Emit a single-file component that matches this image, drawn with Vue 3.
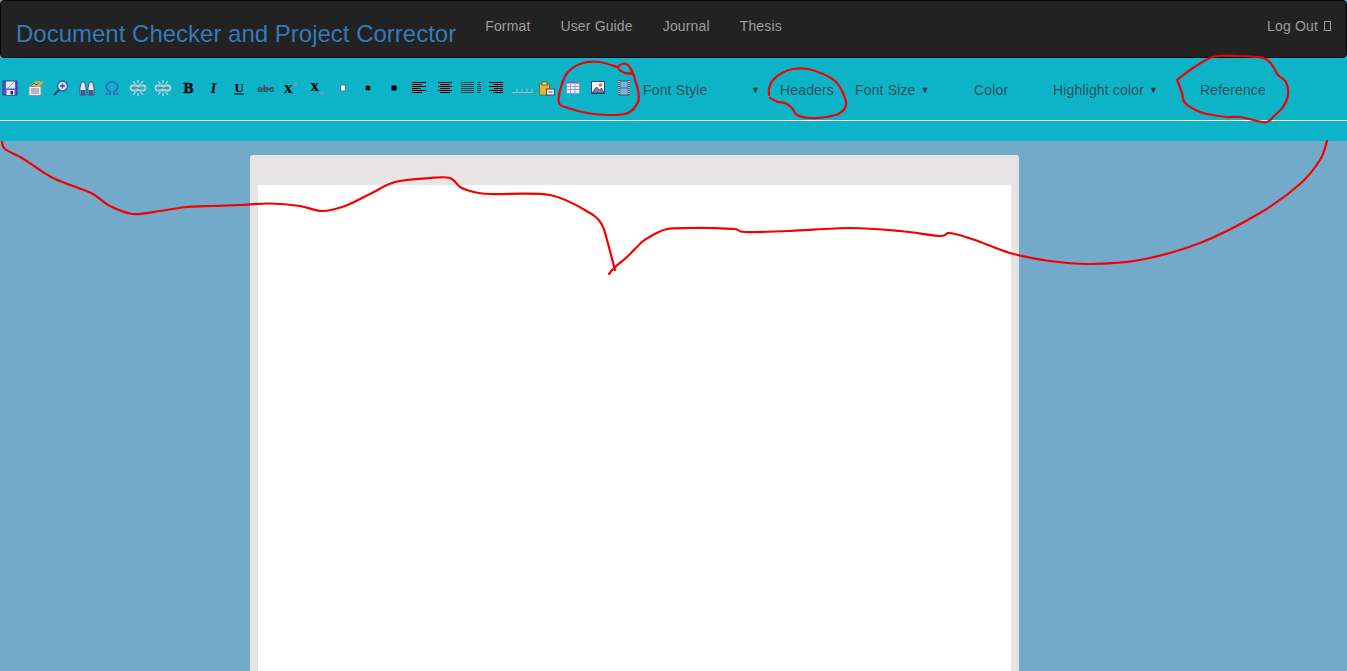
<template>
  <div class="page">
    <nav class="navbar">
      <a class="brand">Document Checker and Project Corrector</a>
      <ul class="nav-links">
        <li v-for="link in links" :key="link">{{ link }}</li>
      </ul>
      <a class="logout">Log Out <span class="missing-glyph"></span></a>
    </nav>

    <div class="toolbar">
      <div class="tools">
        <div class="icons">
          <span v-for="(icon, i) in icons" :key="i" class="tool">
            <svg width="18" height="18" viewBox="0 0 18 18" v-html="icon"></svg>
          </span>
        </div>
        <div class="menus">
          <span class="menu font-style">Font Style<i class="caret">▼</i></span>
          <span class="menu headers">Headers</span>
          <span class="menu font-size">Font Size<i class="caret">▼</i></span>
          <span class="menu color">Color</span>
          <span class="menu highlight">Highlight color<i class="caret">▼</i></span>
          <span class="menu reference">Reference</span>
        </div>
      </div>
      <div class="toolbar-foot"></div>
    </div>

    <main class="desk">
      <div class="sheet">
        <div class="sheet-body"></div>
      </div>
    </main>

    <!-- red pen marks drawn over the screenshot -->
    <svg class="pen" width="1347" height="671" viewBox="0 0 1347 671" fill="none">
      <path v-for="(d, i) in marks" :key="i" :d="d" />
    </svg>
  </div>
</template>

<script setup>
const links = ['Format', 'User Guide', 'Journal', 'Thesis']

const bars = (rows, color = '#000') =>
  rows.map(([x, y, w]) => `<rect x="${x}" y="${y}" width="${w}" height="1" fill="${color}"/>`).join('')

const link = `<g fill="none" stroke="#c4c9d2" stroke-width="1.8"><rect x="1.500" y="6.500" width="8" height="5" rx="2.500"/><rect x="8.500" y="6.500" width="8" height="5" rx="2.500"/></g><path d="M7 8.500l4 1" stroke="#6d7480" stroke-width="1.200"/><path d="M4 2l2.500 3M14 2l-2.500 3M4 16l2.500-3M14 16l-2.500-3M9 1v3M9 14v3" stroke="#e8ebef"/>`

const icons = [
  `<rect x="2" y="2" width="14" height="14" fill="#5a55c4" stroke="#3b3790"/><path d="M5 2.500h9v7H5z" fill="#dfe9f8"/><path d="M7 9l6-6" stroke="#86a3dc"/><rect x="5.500" y="11" width="8" height="5" fill="#e6e6ef"/><rect x="9.500" y="12" width="2.500" height="3.500" fill="#2b2b3a"/>`,
  `<rect x="3" y="7.500" width="12" height="9" fill="#f1f2f2" stroke="#8a93a8"/><path d="M5 10h8M5 12h8M5 14h8" stroke="#6e7c9e"/><path d="M4 7l4-4 4-1 6 1-3 3-2 2-4-1z" fill="#d2b24a"/><path d="M5 7l3-3 2 2M10 6l3-2" stroke="#5e5a46" fill="none"/>`,
  `<path d="M2 16l5-5" stroke="#2e4a72" stroke-width="2.200"/><circle cx="10.500" cy="7" r="5" fill="#dbe8f9" stroke="#2b4fa6" stroke-width="1.300"/><path d="M8 7h5M10.500 4.500v5" stroke="#2b4fa6" stroke-width="1.300"/>`,
  `<path d="M2 9l1.500-6h3L8 9v7H2zM10 9l1.500-6h3L16 9v7h-6z" fill="#e6e8f0" stroke="#3a4578" stroke-width=".8"/><rect x="2.500" y="11" width="5" height="5" fill="#46578f"/><rect x="10.500" y="11" width="5" height="5" fill="#46578f"/>`,
  `<path d="M2.500 15H7v-2.500C4.800 11.500 3.300 9.800 3.300 7.700 3.300 4.800 5.800 3 9 3s5.700 1.800 5.700 4.700c0 2.100-1.500 3.800-3.700 4.800V15h4.500" fill="none" stroke="#4560c8" stroke-width="1.700"/>`,
  link,
  link,
  `<text x="3.500" y="13.500" font-family="Liberation Serif" font-weight="700" font-size="15" fill="#000" stroke="#000" stroke-width=".4">B</text>`,
  `<text x="4.500" y="13.500" font-family="Liberation Serif" font-style="italic" font-weight="700" font-size="15" fill="#000">I</text>`,
  `<text x="3.500" y="12.500" font-family="Liberation Serif" font-weight="700" font-size="13" fill="#000">U</text><rect x="3" y="14.500" width="10" height="1" fill="#000"/>`,
  `<text x="0.500" y="13" font-family="Liberation Sans" font-weight="700" font-size="9.500" fill="#3c4448">abc</text><rect x="0" y="9.500" width="17" height="1" fill="#55464c"/>`,
  `<text x="2" y="13.500" font-family="Liberation Serif" font-weight="700" font-size="17" fill="#000">x</text><rect x="12" y="4" width="3" height="3" fill="#8a8fc8"/>`,
  `<text x="2.500" y="11.500" font-family="Liberation Serif" font-weight="700" font-size="17" fill="#000">x</text><rect x="12.500" y="12.500" width="3" height="3" fill="#8a8fc8"/>`,
  `<rect x="6.500" y="6" width="5" height="6" rx="1.500" fill="#fff" stroke="#333" stroke-width=".6"/>`,
  `<circle cx="9" cy="9" r="2.700" fill="#000" stroke="#ddd" stroke-width=".5" stroke-dasharray="1 1"/>`,
  `<rect x="6.500" y="6.500" width="5" height="5" fill="#000"/>`,
  bars([[2, 3, 14], [2, 5, 10], [2, 7, 14], [2, 9, 9], [2, 11, 14], [2, 13, 10]]),
  bars([[2, 3, 14], [4, 5, 10], [2, 7, 14], [4, 9, 10], [2, 11, 14], [4, 13, 10]]),
  bars([[0, 3, 13], [0, 5, 13], [0, 7, 13], [0, 9, 13], [0, 11, 13], [0, 13, 13], [16, 3, 4], [16, 5, 4], [16, 7, 4], [16, 9, 4], [16, 11, 4], [16, 13, 4]], '#21444c'),
  bars([[2, 3, 14], [6, 5, 10], [2, 7, 14], [7, 9, 9], [2, 11, 14], [6, 13, 10]]),
  `<path d="M-1 13.500h21M4 13.500v-4M9 13.500v-4M14 13.500v-4M19 13.500v-4" stroke="#aab6c2"/>`,
  `<rect x="1.500" y="5" width="10" height="11" fill="#e0b63a" stroke="#87671a"/><rect x="4" y="3" width="5" height="3" fill="#f4e08a" stroke="#7a6020"/><rect x="8.500" y="10" width="8" height="6" fill="#eef1f5" stroke="#454a5a"/><path d="M10.500 13h4" stroke="#555"/>`,
  `<rect x="2.500" y="2.500" width="13" height="12" fill="#eef3fb" stroke="#7d97c8"/><rect x="2.500" y="2.500" width="13" height="2" fill="#4d78c9"/><path d="M2.500 7.500h13M2.500 10.500h13M6.500 5v9.500M11 5v9.500" stroke="#8da6d4"/>`,
  `<rect x="2.500" y="2.500" width="13" height="12" fill="#f5f7fb" stroke="#2a3f86"/><path d="M3 14l4.500-6 3 3 2-2 2.500 5z" fill="#6b7fa8" stroke="#223" stroke-width=".6"/><circle cx="11.500" cy="6" r="1.800" fill="#e8703a"/>`,
  `<rect x="3" y="1" width="12" height="16" fill="#5b6a72"/><rect x="5.500" y="2.500" width="7" height="6" fill="#6fb6ee"/><rect x="5.500" y="9.500" width="7" height="6" fill="#6fb6ee"/><path d="M4 2v14M14 2v14" stroke="#e6e6e6" stroke-dasharray="1 1"/>`
]

// Catmull-Rom through hand-traced points, so the pen strokes stay smooth
const trace = (pts) => {
  let d = `M${pts[0][0]} ${pts[0][1]}`
  for (let i = 0; i < pts.length - 1; i++) {
    const p0 = pts[i - 1] || pts[i]
    const p1 = pts[i]
    const p2 = pts[i + 1]
    const p3 = pts[i + 2] || p2
    const c1 = [p1[0] + (p2[0] - p0[0]) / 6, p1[1] + (p2[1] - p0[1]) / 6]
    const c2 = [p2[0] - (p3[0] - p1[0]) / 6, p2[1] - (p3[1] - p1[1]) / 6]
    d += `C${c1[0]} ${c1[1]} ${c2[0]} ${c2[1]} ${p2[0]} ${p2[1]}`
  }
  return d
}

const marks = [
  [[2, 142], [5, 149], [22, 158], [37, 168], [53, 178], [73, 186], [93, 194], [110, 206], [133, 214], [160, 211], [187, 207], [213, 206], [240, 205], [270, 203.5], [300, 206], [322, 211], [345, 206], [370, 194], [395, 182], [430, 178], [450, 178], [460, 187], [470, 191], [490, 194], [550, 195], [590, 213], [602, 225], [607, 240], [615, 270]],
  [[609, 274], [615, 267], [627, 257], [642, 242], [653, 235], [667, 229], [690, 228], [710, 228], [735, 229], [745, 232], [790, 231], [850, 228], [900, 231], [940, 236], [950, 233], [975, 240], [1010, 253], [1050, 261], [1090, 264], [1140, 260], [1200, 243], [1260, 213], [1300, 184], [1320, 160], [1327, 141]],
  [[617, 67], [600, 62], [583, 63], [568, 72], [561, 87], [559, 103], [568, 108], [587, 113], [610, 115], [628, 113], [638, 102], [638, 90], [635, 80], [633, 74], [625, 73], [618, 68], [622, 64], [628, 65], [633, 73]],
  [[769, 95], [769, 88], [773, 80], [782, 73], [793, 69], [808, 69], [823, 74], [835, 81], [843, 93], [846, 105], [840, 113], [827, 117], [810, 118], [797, 115], [792, 108], [785, 103], [778, 102], [770, 98]],
  [[1177, 80], [1193, 68], [1213, 57], [1237, 56], [1263, 58], [1272, 65], [1278, 75], [1286, 82], [1288, 95], [1283, 107], [1275, 115], [1267, 122], [1257, 121], [1240, 117], [1227, 117], [1213, 115], [1200, 112], [1185, 103], [1182, 93], [1178, 82]]
].map(trace)
</script>

<style>
html, body {
  background: #73a9c9;
}
</style>

<style scoped>
.page {
  position: relative;
  height: 671px;
  overflow: hidden;
  background: #73a9c9;
  font-family: "Liberation Sans", Arial, sans-serif;
  font-size: 14px;
  letter-spacing: 0.15px;
}
.navbar {
  display: flex;
  align-items: flex-start;
  box-sizing: border-box;
  height: 58px;
  background: #222;
  border: 1px solid #080808;
  border-radius: 4px;
  padding: 0 15px;
}
.brand {
  font-size: 24px;
  line-height: 28px;
  margin-top: 19px;
  color: #337ab7;
  letter-spacing: 0;
}
.nav-links {
  display: flex;
  list-style: none;
  margin: 0 0 0 14px;
  padding: 0;
}
.nav-links li {
  padding: 15px;
  line-height: 20px;
  color: #9d9d9d;
}
.logout {
  margin-left: auto;
  padding: 15px 0;
  line-height: 20px;
  color: #9d9d9d;
}
.missing-glyph {
  display: inline-block;
  width: 5px;
  height: 8px;
  margin-left: 2px;
  border: 1px solid #9d9d9d;
}
.toolbar {
  background: #0db4c7;
}
.tools {
  display: flex;
  align-items: center;
  height: 62px;
  border-bottom: 1px solid #fff;
}
.icons {
  display: flex;
  width: 640px;
  flex: none;
  margin: -2px 0 0 -3px;
}
.tool {
  display: flex;
  justify-content: center;
  width: 25.6px;
  flex: none;
}
.tool svg {
  overflow: visible;
}
.menus {
  display: flex;
  align-items: center;
  flex: 1;
  color: #2b525b;
  padding: 2px 0 0 6px;
}
.menu {
  white-space: nowrap;
  display: flex;
  align-items: center;
}
.font-style { width: 137px; justify-content: space-between; padding-right: 20px; box-sizing: border-box; }
.headers { width: 75px; }
.font-size { width: 119px; }
.color { width: 79px; }
.highlight { width: 147px; }
.caret {
  font-style: normal;
  font-size: 9px;
  margin-left: 5px;
  color: #1f3d44;
}
.toolbar-foot {
  height: 20px;
}
.desk {
  padding: 14px 0 0 250px;
}
.sheet {
  box-sizing: border-box;
  width: 769px;
  height: 600px;
  padding: 30px 8px 0;
  background: #e6e5e3;
  border-radius: 3px 3px 0 0;
}
.sheet-body {
  background: #fff;
  height: 100%;
}
.pen {
  position: absolute;
  left: 0;
  top: 0;
  pointer-events: none;
}
.pen path {
  stroke: #f40000;
  stroke-width: 2.2;
  stroke-linecap: round;
  stroke-linejoin: round;
}
</style>
